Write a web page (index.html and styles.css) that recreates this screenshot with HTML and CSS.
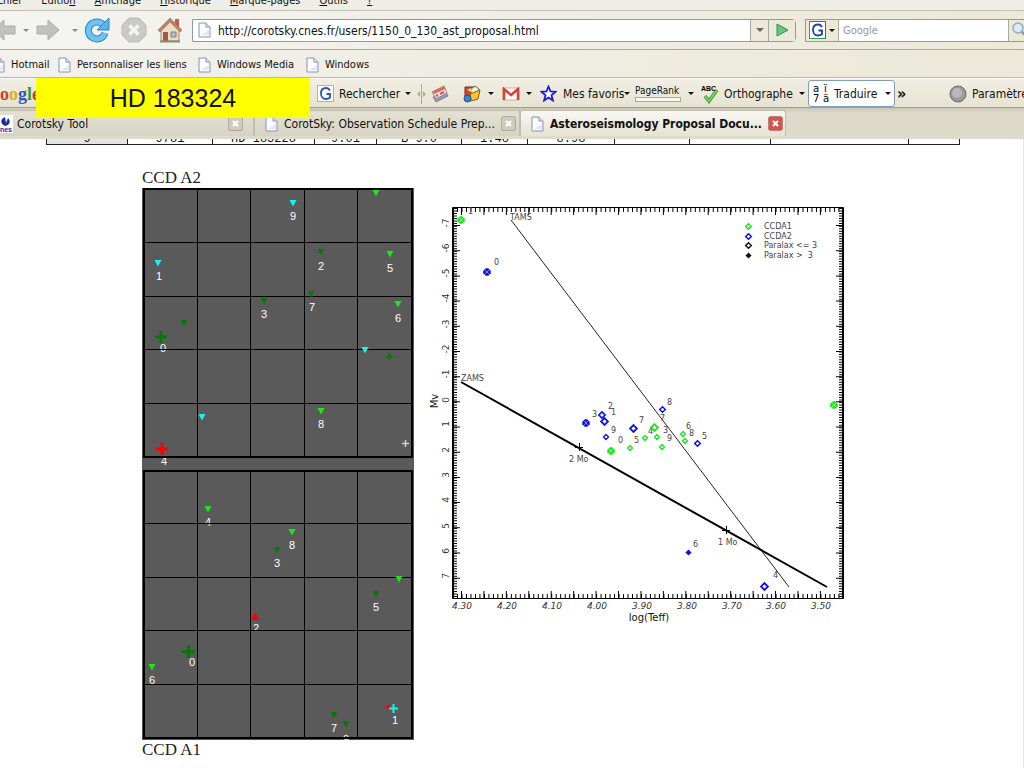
FILE: index.html
```
<!DOCTYPE html>
<html lang="fr">
<head>
  <meta charset="utf-8">
  <title>Asteroseismology Proposal Document</title>
  <meta name="viewport" content="width=device-width, initial-scale=1">
  <link rel="stylesheet" href="styles.css">
</head>
<body>
  <!-- shared icons -->
  <svg class="defs" aria-hidden="true">
    <symbol id="page" viewBox="0 0 13 16">
      <path d="M1 1h7l4 4v10H1z" fill="#fbfcff" stroke="#8a93a8"/>
      <path d="M8 1v4h4" fill="#dfe5f2" stroke="#8a93a8"/>
      <path d="M3 13h8V8z" fill="#dfe6f4"/>
    </symbol>
    <symbol id="arrow" viewBox="0 0 24 24">
      <path d="M1 8h11V2l11 10-11 10v-6H1z" fill="#c1c1bd" stroke="#adada8"/>
    </symbol>
    <symbol id="gbox" viewBox="0 0 17 17">
      <rect x="0.5" y="0.5" width="16" height="16" fill="#fff" stroke="#9db3dc"/>
      <path d="M13 5.5C12 3.6 10.600 3 9 3 5.700 3 4 5.500 4 8.500S5.800 14 9 14c1.600 0 3-.5 4-1.300V9H9.500" fill="none" stroke="#2b55b5" stroke-width="1.800"/>
    </symbol>
    <symbol id="cross" viewBox="0 0 15 15">
      <rect x="0.5" y="0.5" width="14" height="14" rx="2" fill="currentColor" stroke="#00000030"/>
      <path d="M5 5l5 5M10 5l-5 5" stroke="#fff" stroke-width="2.200"/>
    </symbol>
    <symbol id="down" viewBox="-4 -4 8 8"><path d="M-3.500-3h7L0 3.500z" fill="currentColor"/></symbol>
    <symbol id="plus" viewBox="-6 -6 12 12"><path d="M-1.500-6h3v4.500H6v3H1.500V6h-3V1.500H-6v-3h4.500z" fill="currentColor"/></symbol>
    <symbol id="open" viewBox="-4 -4 8 8"><path d="M0-2.500L2.500 0 0 2.500-2.500 0z" fill="#fff" stroke="currentColor" stroke-width="1.300"/></symbol>
    <symbol id="full" viewBox="-4 -4 8 8"><path d="M0-3.500L3.500 0 0 3.500-3.500 0z" fill="currentColor"/></symbol>
    <symbol id="crossed" viewBox="-4 -4 8 8"><path d="M-1-3h2l2 2v2L1 3h-2l-2-2v-2z" fill="currentColor"/><path d="M-2-2l4 4M2-2l-4 4" stroke="#fff" stroke-width="0.400"/></symbol>
  </svg>

  <header class="browser">
    <nav class="menubar">
      <span>F<u>i</u>chier</span>
      <span>Editio<u>n</u></span>
      <span><u>A</u>ffichage</span>
      <span><u>H</u>istorique</span>
      <span><u>M</u>arque-pages</span>
      <span><u>O</u>utils</span>
      <span><u>?</u></span>
    </nav>

    <div class="navbar">
      <button class="icon-button back" aria-label="Précédent"><svg width="24" height="24"><use href="#arrow"/></svg></button>
      <button class="icon-button caret light" aria-label="Historique précédent"></button>
      <button class="icon-button" aria-label="Suivant"><svg width="24" height="24"><use href="#arrow"/></svg></button>
      <button class="icon-button caret light" aria-label="Historique suivant"></button>
      <button class="icon-button" aria-label="Actualiser">
        <svg width="26" height="26" viewBox="0 0 26 26">
          <path d="M19 7.500A8.500 8.500 0 1 0 21 16" fill="none" stroke="#2b86c8" stroke-width="7"/>
          <path d="M19 7.500A8.500 8.500 0 1 0 21 16" fill="none" stroke="#6cc3f4" stroke-width="5"/>
          <path d="M25 1v12H13z" fill="#58b4ec" stroke="#2b86c8"/>
        </svg>
      </button>
      <button class="icon-button" aria-label="Arrêter">
        <svg width="26" height="26" viewBox="0 0 26 26">
          <path d="M8 1h10l7 7v10l-7 7H8l-7-7V8z" fill="#c9c9c6" stroke="#bbbbb8"/>
          <path d="M8.500 8.500l9 9M17.500 8.500l-9 9" stroke="#f3f3f0" stroke-width="3.500"/>
        </svg>
      </button>
      <button class="icon-button" aria-label="Accueil">
        <svg width="26" height="26" viewBox="0 0 26 26">
          <path d="M18 2h4v8h-4z" fill="#b5654a"/>
          <path d="M4 12l9-8 9 8v12H4z" fill="#ecdcc4" stroke="#a28e78"/>
          <path d="M1 13L13 1l12 12-2 2L13 5 3 15z" fill="#c0806a" stroke="#9a6554" stroke-width="0.500"/>
          <path d="M6 15h5v9H6z" fill="#9d5c48"/>
          <path d="M14 15h5v5h-5z" fill="#a4c3da" stroke="#8a7a6a"/>
          <path d="M3 24.500h20" stroke="#8e8a70" stroke-width="2"/>
        </svg>
      </button>
      <form class="address">
        <svg width="13" height="16"><use href="#page"/></svg>
        <input type="text" aria-label="Adresse" value="http://corotsky.cnes.fr/users/1150_0_130_ast_proposal.html">
        <button type="button" class="drop" aria-label="Adresses récentes"></button>
        <button type="button" class="go" aria-label="Aller">
          <svg width="13" height="14" viewBox="0 0 13 14"><path d="M1 1l11 6-11 6z" fill="#6cc482" stroke="#2d9350"/></svg>
        </button>
      </form>
      <form class="search">
        <button type="button" class="engine" aria-label="Moteur de recherche">
          <svg width="17" height="18" viewBox="0 0 17 18">
            <path d="M0 0h17v18H0z" fill="#fff"/>
            <path d="M0 .5h17" stroke="#3b63c8"/><path d="M.5 0v18M0 17.500h17" stroke="#3a9c4a"/><path d="M16.500 0v18" stroke="#d32"/>
            <path d="M13 6C12 4 10.600 3.500 9 3.500 5.700 3.500 4 6 4 9s1.800 5.500 5 5.500c1.600 0 3-.5 4-1.300V9.500H9.500" fill="none" stroke="#1d3fb0" stroke-width="1.800"/>
          </svg>
        </button>
        <input type="text" aria-label="Recherche" placeholder="Google">
        <button type="button" class="find" aria-label="Rechercher">
          <svg width="16" height="16" viewBox="0 0 16 16"><path d="M9 9l6 6" stroke="#999" stroke-width="3"/><circle cx="6" cy="6" r="5" fill="#d5ebf7" stroke="#9aabb4" stroke-width="1.500"/></svg>
        </button>
      </form>
    </div>

    <nav class="bookmarks">
      <a href="#"><svg width="13" height="16"><use href="#page"/></svg>Hotmail</a>
      <a href="#"><svg width="13" height="16"><use href="#page"/></svg>Personnaliser les liens</a>
      <a href="#"><svg width="13" height="16"><use href="#page"/></svg>Windows Media</a>
      <a href="#"><svg width="13" height="16"><use href="#page"/></svg>Windows</a>
    </nav>

    <div class="toolbar">
      <span class="logo"><b class="red">o</b><b class="yellow">o</b><b class="blue">g</b><b class="green">l</b><b class="red">e</b></span>
      <button class="tool"><svg width="17" height="17"><use href="#gbox"/></svg>Rechercher</button>
      <button class="tool caret" aria-label="Options de recherche"></button>
      <svg class="grip" width="9" height="20" viewBox="0 0 9 20"><path d="M4.500 0v20" stroke="#aaa798"/><path d="M3 7v6L0 10zM6 7v6l3-3z" fill="#aaa798"/></svg>
      <button class="tool" aria-label="Actualités">
        <svg width="18" height="18" viewBox="0 0 18 18">
          <path d="M2 12l13-5 2 4-12 6z" fill="#8e9cc4" stroke="#6a6a90" stroke-width="0.700"/>
          <path d="M1 7l12-6 3 7L5 14z" fill="#fbe4dc" stroke="#a87872"/>
          <path d="M2 6.500l11-5 1 2.500L3 9z" fill="#dc6658"/>
          <path d="M5 11l2-1M9 9l4-2" stroke="#b65a66" stroke-width="2"/>
        </svg>
      </button>
      <button class="tool" aria-label="Galerie">
        <svg width="18" height="18" viewBox="0 0 18 18">
          <path d="M2 2h9v9H2z" fill="#d4442c" stroke="#6b3022"/>
          <path d="M8 4l4-3 4 3v5H8z" fill="#e2eeff" stroke="#845a20"/>
          <path d="M7 9l10-4-2 9-7 2z" fill="#f6c62c" stroke="#8a5c10"/>
          <path d="M4 5l4-2 1 4z" fill="#f9e870"/>
          <circle cx="4.500" cy="13.500" r="3.500" fill="#3d83c8" stroke="#244f88"/>
        </svg>
      </button>
      <button class="tool caret" aria-label="Options de galerie"></button>
      <button class="tool" aria-label="Gmail">
        <svg width="18" height="14" viewBox="0 0 18 14"><path d="M1 1h16v12H1z" fill="#fff" stroke="#d8a8a4"/><path d="M2 13V2l7 6 7-6v11" fill="none" stroke="#dd3f36" stroke-width="2.500"/></svg>
      </button>
      <button class="tool caret" aria-label="Options de Gmail"></button>
      <button class="tool favorites">
        <svg width="17" height="17" viewBox="0 0 17 17"><path d="M8.500 1.500l2 5 5 .3-4 3.400 1.400 5.300-4.400-3-4.400 3 1.400-5.300-4-3.400 5-.3z" fill="#fff" stroke="#1a1ae0" stroke-width="1.800"/></svg>
        Mes favoris<i class="triangle"></i>
      </button>
      <button class="tool pagerank"><span>PageRank</span><i class="meter"></i></button>
      <button class="tool caret" aria-label="Options de PageRank"></button>
      <button class="tool spell">
        <svg width="18" height="20" viewBox="0 0 18 20"><text x="0" y="7" class="abc">ABC</text><path d="M4 12l4 5 8-11" fill="none" stroke="#3e8e2e" stroke-width="3.500"/><path d="M4 12l4 5 8-11" fill="none" stroke="#86d160" stroke-width="1.800"/></svg>
        Orthographe
      </button>
      <button class="tool caret" aria-label="Options d'orthographe"></button>
      <button class="tool translate">
        <svg width="17" height="20" viewBox="0 0 17 20"><text x="0" y="8">a</text><text x="11" y="8">ï</text><text x="0" y="18">7</text><text x="10" y="18">ä</text></svg>
        Traduire<i class="triangle"></i>
      </button>
      <button class="tool more" aria-label="Plus">»</button>
      <button class="tool settings">
        <svg width="18" height="18" viewBox="0 0 18 18"><circle cx="9" cy="9" r="8" fill="#9b9b9b" stroke="#696969"/><circle cx="8" cy="8" r="5" fill="#b9b9b9"/></svg>
        Paramètres
      </button>
    </div>

    <div class="tabs">
      <div class="tab first">
        <svg width="18" height="18" viewBox="0 0 18 18"><path d="M0 0h18v18H0z" fill="#fff"/><path d="M10 2C5 4 5 9 10 11c5-1 6-5 3-8l-2 5" fill="#1b2a9c"/><text x="1" y="17" class="cnes">cnes</text></svg>
        <span>Corotsky Tool</span>
        <button aria-label="Fermer l'onglet"><svg width="15" height="15"><use href="#cross"/></svg></button>
      </div>
      <div class="tab">
        <svg width="13" height="16"><use href="#page"/></svg>
        <span>CorotSky: Observation Schedule Prep...</span>
        <button aria-label="Fermer l'onglet"><svg width="15" height="15"><use href="#cross"/></svg></button>
      </div>
      <div class="tab active">
        <svg width="13" height="16"><use href="#page"/></svg>
        <span>Asteroseismology Proposal Docu...</span>
        <button aria-label="Fermer l'onglet"><svg width="15" height="15"><use href="#cross"/></svg></button>
      </div>
    </div>
    <div class="banner">HD 183324</div>
  </header>

  <main>
    <div class="stars-clip">
      <table class="stars">
        <colgroup><col class="w81"><col class="w85"><col class="w102"><col class="w62"><col class="w85"><col class="w66"><col class="w87"><col class="w75"><col class="w81"><col class="w138"><col class="w51"></colgroup>
        <tr><th>9</th><td>9781</td><td>HD 183228</td><td>9.01</td><td>B 9.0</td><td>1.48</td><td>8.98</td><td></td><td></td><td></td><td></td></tr>
      </table>
    </div>

    <div class="figures">
      <figure class="ccd">
        <figcaption>CCD A2</figcaption>
        <svg width="272" height="552" viewBox="142 188 272 552" role="img" aria-label="CCD A2 et A1">
          <rect x="142" y="188" width="272" height="552" fill="#5a5a5a"/>
          <g class="digits">
            <text x="293" y="220">9</text><text x="159" y="280">1</text><text x="321" y="270">2</text>
            <text x="390" y="272">5</text><text x="264" y="318">3</text><text x="312" y="311">7</text>
            <text x="398" y="322">6</text><text x="163" y="352">0</text><text x="321" y="428">8</text>
            <text x="164" y="465">4</text><text x="208" y="526">4</text><text x="292" y="549">8</text>
            <text x="277" y="567">3</text><text x="376" y="611">5</text>
            <text x="192" y="666">0</text><text x="152" y="684">6</text><text x="334" y="732">7</text>
            <text x="395" y="724">1</text><text x="346" y="743">9</text><text x="256" y="632">2</text>
          </g>
          <path d="M250 630h12v4h-12z" fill="#5a5a5a"/>
          <path class="grid" d="M197.500 189v268M250.500 189v268M304.500 189v268M357.500 189v268M143 242.500h269M143 296.500h269M143 349.500h269M143 403.500h269
            M197.500 471v267M250.500 471v267M304.500 471v267M357.500 471v267M143 523.500h269M143 577.500h269M143 630.500h269M143 684.500h269"/>
          <path class="frame" d="M144 189h268v268H144zM144 471h268v267H144z"/>
          <g class="cyan">
            <use href="#down" x="289" y="199" width="8" height="8"/>
            <use href="#down" x="154" y="259" width="8" height="8"/>
            <use href="#down" x="361" y="346" width="8" height="8"/>
            <use href="#down" x="198" y="413" width="8" height="8"/>
          </g>
          <g class="lime">
            <use href="#down" x="372" y="189" width="8" height="8"/>
            <use href="#down" x="386" y="250" width="8" height="8"/>
            <use href="#down" x="394" y="300" width="8" height="8"/>
            <use href="#down" x="317" y="407" width="8" height="8"/>
            <use href="#down" x="204" y="505" width="8" height="8"/>
            <use href="#down" x="288" y="528" width="8" height="8"/>
            <use href="#down" x="395" y="575" width="8" height="8"/>
            <use href="#down" x="148" y="663" width="8" height="8"/>
          </g>
          <g class="dark">
            <use href="#down" x="317" y="248" width="8" height="8"/>
            <use href="#down" x="260" y="297" width="8" height="8"/>
            <use href="#down" x="307" y="290" width="8" height="8"/>
            <use href="#down" x="180" y="319" width="8" height="8"/>
            <use href="#plus" x="155" y="331" width="12" height="12"/>
            <use href="#plus" x="386" y="353" width="7" height="7"/>
            <use href="#down" x="273" y="546" width="8" height="8"/>
            <use href="#down" x="372" y="590" width="8" height="8"/>
            <use href="#plus" x="182" y="645" width="13" height="13"/>
            <use href="#down" x="330" y="711" width="8" height="8"/>
            <use href="#down" x="342" y="720" width="8" height="8"/>
          </g>
          <g class="bright-red">
            <use href="#plus" x="156" y="443" width="12" height="12"/>
            <path d="M251 620h8l-4-8zM385 707l5-3v7z" fill="currentColor"/>
          </g>
          <path d="M393.500 704v9M389 708.500h9" stroke="#19f0f0" stroke-width="2"/>
          <path d="M405.500 440v7M402 443.500h7" stroke="#d0d0d0" stroke-width="1.500"/>
        </svg>
        <figcaption>CCD A1</figcaption>
      </figure>

      <figure class="diagram">
        <svg width="425" height="435" viewBox="425 195 425 435" role="img" aria-label="Diagramme Mv / log(Teff)">
          <!-- frame and ticks -->
          <path d="M452.500 207.500h391v391h-391z" fill="none" stroke="#000"/>
          <path d="M453 208v390" class="axis"/><path d="M843 208v390" class="axis"/>
          <path class="tick-y" stroke-width="4" d="M455 208v390M841 208v390"/>
          <path class="tick-y major" stroke-width="7" d="M456.500 225v373M839.500 225v373"/>
          <path class="tick-x" stroke-width="4" d="M457 210h386M457 596h386"/>
          <path class="tick-x major" stroke-width="7" d="M461 211.500h382M461 594.500h382"/>

          <!-- main sequences -->
          <path d="M511 220L789 587" stroke="#222"/>
          <path d="M461 382L827 587" stroke="#000" stroke-width="2"/>
          <path d="M579.500 443v8M575 447.500h8M726.500 526v8M722 530.500h8" stroke="#000"/>

          <g class="small">
            <text x="510" y="220">TAMS</text><text x="461" y="381">ZAMS</text>
            <text x="569" y="462">2 Mo</text><text x="718" y="545">1 Mo</text>
            <text x="764" y="229">CCDA1</text><text x="764" y="239">CCDA2</text>
            <text x="764" y="248">Paralax &lt;= 3</text><text x="764" y="258">Paralax &gt; &nbsp;3</text>
            <text x="494" y="265">0</text><text x="592" y="417">3</text><text x="608" y="409">2</text>
            <text x="611" y="415">1</text><text x="611" y="433">9</text><text x="618" y="443">0</text>
            <text x="639" y="423">7</text><text x="634" y="443">5</text><text x="648" y="434">4</text>
            <text x="660" y="421">7</text><text x="663" y="433">3</text><text x="667" y="441">9</text>
            <text x="667" y="405">8</text><text x="686" y="429">6</text><text x="689" y="436">8</text>
            <text x="702" y="439">5</text><text x="693" y="547">6</text><text x="773" y="578">4</text>
            <text x="468" y="214">1</text>
          </g>

          <g class="scale-x">
            <text x="462" y="609">4.30</text><text x="507" y="609">4.20</text><text x="552" y="609">4.10</text>
            <text x="597" y="609">4.00</text><text x="642" y="609">3.90</text><text x="687" y="609">3.80</text>
            <text x="732" y="609">3.70</text><text x="776" y="609">3.60</text><text x="821" y="609">3.50</text>
          </g>
          <g class="scale-y" transform="translate(449 0) rotate(-90)">
            <text x="-223">-7</text><text x="-248">-6</text><text x="-273">-5</text><text x="-298">-4</text>
            <text x="-324">-3</text><text x="-349">-2</text><text x="-374">-1</text><text x="-400">0</text>
            <text x="-424">1</text><text x="-450">2</text><text x="-475">3</text><text x="-500">4</text>
            <text x="-526">5</text><text x="-551">6</text><text x="-576">7</text>
          </g>
          <g class="axis-name">
            <text x="649" y="621">log(Teff)</text>
            <text transform="translate(438 401) rotate(-90)">Mv</text>
          </g>

          <!-- CCD A1 stars -->
          <g class="lime">
            <use href="#open" x="744" y="222" width="9" height="9"/>
            <use href="#crossed" x="456" y="215" width="10" height="10"/>
            <use href="#crossed" x="829" y="400" width="10" height="10"/>
            <use href="#crossed" x="606" y="446" width="10" height="10"/>
            <use href="#open" x="626" y="444" width="8" height="8"/>
            <use href="#open" x="641" y="434" width="8" height="8"/>
            <use href="#open" x="649" y="422" width="11" height="11"/>
            <use href="#open" x="653" y="433" width="8" height="8"/>
            <use href="#open" x="658" y="443" width="8" height="8"/>
            <use href="#open" x="679" y="430" width="8" height="8"/>
            <use href="#open" x="681" y="437" width="8" height="8"/>
          </g>
          <!-- CCD A2 stars -->
          <g class="navy">
            <use href="#open" x="744" y="232" width="9" height="9"/>
            <use href="#crossed" x="482" y="267" width="10" height="10"/>
            <use href="#crossed" x="581" y="418" width="10" height="10"/>
            <use href="#open" x="597" y="410" width="10" height="10"/>
            <use href="#open" x="599" y="416" width="11" height="11"/>
            <use href="#open" x="602" y="433" width="8" height="8"/>
            <use href="#open" x="628" y="423" width="11" height="11"/>
            <use href="#open" x="658" y="405" width="9" height="9"/>
            <use href="#open" x="693" y="439" width="9" height="9"/>
            <use href="#full" x="685" y="549" width="7" height="7"/>
            <use href="#open" x="759" y="581" width="11" height="11"/>
          </g>
          <use href="#open" x="744" y="241" width="9" height="9"/>
          <use href="#full" x="745" y="252" width="7" height="7"/>
        </svg>
      </figure>
    </div>
  </main>
</body>
</html>
```
FILE: styles.css
```
*, *::before, *::after {
  box-sizing: border-box;
  margin: 0;
  padding: 0;
}

body {
  font-family: "DejaVu Sans Condensed", "DejaVu Sans", sans-serif;
  font-size: 11px;
  line-height: 16px;
  background: #fff;
  color: #111;
  overflow: hidden;
}

button, input {
  font: inherit;
  color: inherit;
  background: none;
  border: none;
}

svg {
  display: block;
  flex: none;
}

.defs {
  width: 0;
  height: 0;
  position: absolute;
}

/* browser window */
.browser {
  position: relative;
  background: #ece9d8;
  overflow: hidden;
}

.menubar {
  height: 10px;
  display: flex;
  align-items: flex-end;
  gap: 19px;
  margin-left: -10px;
  padding-bottom: 1px;
  overflow: hidden;
  background: #efeee6;
}

.navbar {
  display: grid;
  grid-template-columns: 28px 16px 33px 15px 37px 36px 35px 604px 1fr;
  align-items: center;
  height: 40px;
  margin: 0 -8px;
  border-top: 1px solid #c4c2b6;
  border-bottom: 1px solid #aaa89c;
  background: linear-gradient(90deg, #f4f4f1, #ece9d8);
}

.back svg {
  transform: scaleX(-1);
}

.caret {
  display: flex;
  align-items: center;
  justify-content: center;
}

.caret::after, .triangle, .drop::after, .engine::after {
  content: "";
  border: 3px solid transparent;
  border-top-color: #111;
  border-bottom: 0;
}

.light::after {
  border-top-color: #888;
}

.navbar .caret {
  width: 12px;
}

.address, .search {
  display: flex;
  align-items: center;
  height: 23px;
  border: 1px solid #8f9c9e;
  background: #fff;
}

.address {
  padding-left: 5px;
  border-radius: 0 4px 4px 0;
  font-size: 12px;
}

.address input, .search input {
  flex: 1;
  min-width: 0;
  padding: 1px 7px 0;
  align-self: stretch;
}

.drop, .go, .engine, .find {
  display: flex;
  align-items: center;
  justify-content: center;
  align-self: stretch;
  background: #ece9d8;
  border-left: 1px solid #a9aba2;
}

.drop {
  width: 18px;
}

.drop::after {
  border-width: 4px 4px 0;
  border-top-color: #666;
}

.go {
  width: 27px;
}

.search {
  margin-left: 9px;
}

.search input {
  padding: 1px 4px 0;
}

.search input::placeholder {
  color: #999;
}

.engine {
  width: 33px;
  gap: 3px;
  border-left: 0;
  border-right: 1px solid #a9aba2;
}

.find {
  width: 23px;
}

.bookmarks {
  display: grid;
  grid-template-columns: 66px 140px 108px 1fr;
  align-items: center;
  height: 28px;
  margin-left: -8px;
  padding-top: 2px;
  border-bottom: 1px solid #bbb8aa;
  background: linear-gradient(90deg, #f2f1ec, #ece9d8);
}

.bookmarks a {
  display: flex;
  align-items: center;
  gap: 6px;
  color: inherit;
  text-decoration: none;
  white-space: nowrap;
}

.toolbar {
  display: grid;
  grid-template-columns: 317px 83px 16px 15px 32px 20px 19px 19px 19px 95px 48px 18px 93px 14px 87px 54px 1fr;
  align-items: center;
  height: 30px;
  padding-top: 1px;
  font-size: 12px;
  border-top: 1px solid #fbfaf5;
  border-bottom: 1px solid #a19f90;
  background: linear-gradient(#f1efe3, #e6e3d2);
}

.tool {
  display: flex;
  align-items: center;
  gap: 5px;
  white-space: nowrap;
}

.tool.caret {
  width: 16px;
}

.logo {
  font: bold 18px/24px "Liberation Serif", serif;
}

.red { color: #d23b2b; }
.yellow { color: #e2a91c; }
.blue { color: #2c57c8; }
.green { color: #37983b; }

.grip {
  margin-left: 1px;
}

.favorites {
  gap: 6px;
}

.favorites .triangle {
  margin-left: -6px;
}

.pagerank {
  flex-direction: column;
  align-items: flex-start;
  gap: 1px;
  font-size: 10px;
  line-height: 10px;
}

.meter {
  width: 46px;
  height: 5px;
  border: 1px solid #aaa798;
  background: #f8f8f2;
}

.abc {
  font: bold 7px "Liberation Sans", sans-serif;
}

.translate {
  height: 27px;
  padding-left: 4px;
  gap: 4px;
  border: 1px solid #7f9db9;
  border-radius: 3px;
  background: #fff;
}

.translate text {
  font: 10px "DejaVu Sans", sans-serif;
}

.translate .triangle {
  margin-left: 4px;
}

.more {
  padding-left: 2px;
  font-size: 16px;
  font-weight: bold;
}

.tabs {
  display: flex;
  align-items: flex-end;
  height: 31px;
  font-size: 12px;
  border-bottom: 3px solid #dedbcb;
  background: linear-gradient(#c9c6b8, #dddac9 5px);
}

.tab {
  display: flex;
  align-items: center;
  width: 266px;
  height: 26px;
  padding: 0 8px 0 10px;
  gap: 6px;
  border: 1px solid #c0bdad;
  border-bottom: 0;
  background: linear-gradient(#e3e1d3, #d7d4c4);
}

.tab.first {
  width: 260px;
  padding-left: 0;
  padding-right: 10px;
  margin-left: -6px;
  gap: 4px;
}

.tab span {
  flex: 1;
  white-space: nowrap;
}

.tab button {
  color: #cfccbd;
}

.tab.active {
  font-weight: bold;
  border-radius: 3px 3px 0 0;
  background: linear-gradient(#f8f7f2, #e6e3d4);
}

.tab.active button {
  color: #d9534c;
}

.cnes {
  font: bold 7px "Liberation Sans", sans-serif;
  fill: #1b2a9c;
}

.banner {
  position: absolute;
  left: 36px;
  top: 78px;
  width: 274px;
  height: 40px;
  background: #ff0;
  color: #111;
  font: 25px/41px "Liberation Sans", sans-serif;
  text-align: center;
}

/* proposal page */
main {
  min-height: 100vh;
  border-right: 1px solid #e4e4e4;
}

.stars-clip {
  display: flex;
  align-items: flex-end;
  height: 6px;
  overflow: hidden;
  padding-left: 46px;
}

.stars {
  width: 913px;
  table-layout: fixed;
  border-collapse: collapse;
  font: 12px/10px "Liberation Mono", monospace;
  text-align: center;
}

.stars th, .stars td {
  height: 20px;
  border: 1px solid #222;
  vertical-align: bottom;
}

.stars th {
  font-weight: normal;
  background: #e4e4e4;
}

.w51 { width: 51px; }
.w62 { width: 62px; }
.w66 { width: 66px; }
.w75 { width: 75px; }
.w81 { width: 81px; }
.w85 { width: 85px; }
.w87 { width: 87px; }
.w102 { width: 102px; }
.w138 { width: 138px; }

.figures {
  display: flex;
  align-items: flex-start;
  gap: 11px;
  padding: 23px 0 0 142px;
}

figcaption {
  font: 17px/20px "Liberation Serif", serif;
  color: #222;
}

.diagram {
  padding-top: 27px;
}

.digits {
  font: 11px "Liberation Sans", sans-serif;
  fill: #fff;
  text-anchor: middle;
}

.grid {
  stroke: #000;
}

.frame {
  fill: none;
  stroke: #000;
  stroke-width: 2;
}

.cyan { color: #19f0f0; }
.lime { color: #1be61b; }
.dark { color: #0a760a; }
.bright-red { color: #f00; }
.navy { color: #1010e8; }

.diagram text {
  font-family: "DejaVu Sans", sans-serif;
}

.axis {
  stroke: #000;
  stroke-width: 2;
}

.tick-x, .tick-y {
  stroke: #000;
  fill: none;
}

.tick-y { stroke-dasharray: 1 1.519; }
.tick-y.major { stroke-dasharray: 1 24.19; }
.tick-x { stroke-dasharray: 1 3.487; }
.tick-x.major { stroke-dasharray: 1 21.43; }

.small {
  font-size: 8px;
  fill: #444;
}

.scale-x {
  font-size: 9px;
  font-style: italic;
  fill: #333;
  text-anchor: middle;
}

.scale-y {
  font-size: 9px;
  fill: #333;
  text-anchor: middle;
}

.axis-name {
  font-size: 10px;
  fill: #111;
  text-anchor: middle;
}
```
